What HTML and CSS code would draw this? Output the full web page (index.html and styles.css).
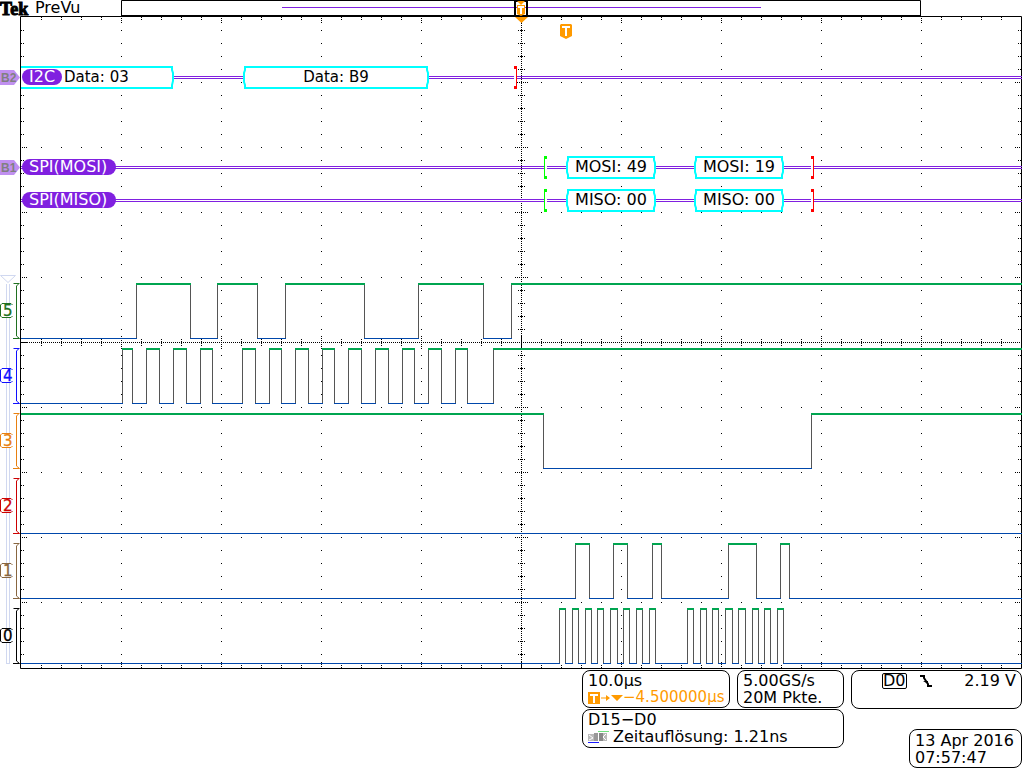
FILE: index.html
```html
<!DOCTYPE html>
<html lang="de">
<head>
<meta charset="utf-8">
<title>Tek PreVu</title>
<link rel="stylesheet" href="styles.css">
</head>
<body>
<main class="scope">
  <svg class="screen" viewBox="0 0 1024 670" role="img" aria-label="Oszilloskop">
    <text class="brand" x="0" y="15">Tek</text>
    <text class="label" x="35" y="13">PreVu</text>

    <g class="record">
      <path class="ink" d="M121.5 15V.5H920.5V15"/>
      <path class="ink thick" d="M121 16H921"/>
      <path class="bus" d="M282 7.5H761"/>
      <rect class="window" x="515" y="1" width="12" height="15"/>
    </g>

    <g id="ranges"></g>

    <path class="ink" d="M20.5 668.5V16.5H1021.5V668.5Z"/>
    <g class="grid" id="grid"></g>

    <g id="traces"></g>

    <g class="buses">
      <path class="bus" d="M21 76.5H1022M21 78.5H1022M21 166.5H1022M21 168.5H1022M21 199.5H1022M21 201.5H1022"/>
      <path class="packet" d="M21 67H172V70L173 73V81L172 85V88H21"/>
      <g id="packets"></g>
      <g id="marks"></g>
      <rect class="pill" x="22" y="69" width="40" height="16" rx="8"/>
      <rect class="pill" x="22" y="159" width="94" height="16" rx="8"/>
      <rect class="pill" x="22" y="192" width="94" height="16" rx="8"/>
      <text class="label light" x="29" y="82">I2C</text>
      <text class="label data" x="64" y="82">Data: 03</text>
      <text class="label light" x="29" y="172">SPI(MOSI)</text>
      <text class="label light" x="29" y="205">SPI(MISO)</text>
    </g>

    <g class="busTags">
      <path class="tag" d="M0 70H14L20 77.500L14 85H0Z"/>
      <path class="tag" d="M0 160H14L20 167.500L14 175H0Z"/>
      <text class="tagText" x="1" y="82">B2</text>
      <text class="tagText" x="1" y="172">B1</text>
    </g>

    <g class="triggers">
      <path class="orange" d="M515 17H528L521.500 23ZM517 1H525L521 5ZM517 5H525V14L521 16L517 14Z"/>
      <path class="cut" d="M518 7H524M521 7V14"/>
      <path class="orange" d="M561 24H571L572 25V36L566 39L560 36V25Z"/>
      <path class="cut" d="M562 27H570M566 27V36"/>
    </g>
  </svg>

  <footer class="readouts">
    <section class="stack">
      <div class="row">
        <div class="box timebase">
          <div>10.0µs</div>
          <div class="delay">
            <svg class="delayIcon" viewBox="0 0 35 14" aria-hidden="true">
              <path class="orange" d="M0 1H12V13H0ZM18 4L22 7L18 10ZM23 4H35L29 10Z"/>
              <path class="cut" d="M2 4H10M6 4V12"/>
              <path class="arrow" d="M13 7H20"/>
            </svg><span>−4.500000µs</span>
          </div>
        </div>
        <div class="box rate">
          <div>5.00GS/s</div>
          <div>20M Pkte.</div>
        </div>
      </div>
      <div class="box digital">
        <div>D15−D0</div>
        <div class="resolution">
          <svg class="logic" viewBox="0 0 21 12" aria-hidden="true">
            <path fill="#bbb" d="M0 3H6V10H0Z"/><path fill="#999" d="M6 2H10V10H6Z"/><path fill="#888" d="M11 2H15V10H11Z"/><path fill="#bbb" d="M15 2H19V10H15Z"/>
            <path stroke="#fff" fill="none" d="M1 4L5 7L1 9M18 3L15 6L18 9"/><path stroke="#1a1aff" d="M0 11.500H11"/><path stroke="#70e080" d="M10 .500H21"/>
          </svg>
          <span>Zeitauflösung: 1.21ns</span>
        </div>
      </div>
    </section>
    <section class="side">
      <div class="box trigger">
        <span class="source">D0</span>
        <svg class="slope" viewBox="0 0 12 12" aria-label="fallende Flanke"><path class="step" d="M0 1H4V3L8 9V11H12"/><path d="M3 6H8V9Z"/></svg>
        <span class="level">2.19 V</span>
      </div>
      <div class="box clock">
        <div>13 Apr 2016</div>
        <div>07:57:47</div>
      </div>
    </section>
  </footer>
</main>
<script src="script.js"></script>
</body>
</html>
```
FILE: styles.css
```css
* { box-sizing: border-box; }

body {
  margin: 0;
  background: #fff;
  color: #000;
  font: 16px/17px "DejaVu Sans", sans-serif;
}

.scope { display: flex; flex-direction: column; }
.screen { display: block; width: 100%; height: auto; }

.label { font-size: 16px; }
.data { font-size: 15px; }
.light { fill: #fff; }
.brand { font: bold 18px "Liberation Serif", serif; stroke: #000; stroke-width: 1; }
.middle { text-anchor: middle; }

.ink { fill: none; stroke: #000; }
.thick { stroke-width: 2; }
.window { fill: none; stroke: #000; stroke-width: 2; }
.bus { fill: none; stroke: #8020e0; }
.packet { fill: #fff; stroke: #00ffff; stroke-width: 2; }
.pill { fill: #8020e0; }
.tag { fill: #c090f0; }
.tagText { fill: #808080; font: bold 12px "Liberation Sans", sans-serif; }

.grid path { fill: none; stroke: #000; }
.major { stroke-dasharray: 1 12; }
.minor { stroke-dasharray: 1 19; }
.fine { stroke-dasharray: 1 1; }

.high { fill: none; stroke: #00a550; stroke-width: 2; }
.low { fill: none; stroke: #0047ab; }
.edge { fill: none; stroke: #555; }

.gap { fill: #fff; }
.start { fill: #00ff00; }
.stop { fill: #ff0000; }
.rail { fill: none; stroke: #d0d8f0; }
.range { fill: none; }
.channel { font-size: 15px; }

.orange { fill: #ff9a00; }
.cut { fill: none; stroke: #fff; stroke-width: 2; }
.arrow { fill: none; stroke: #ff9a00; }

.readouts {
  display: flex;
  justify-content: space-between;
  gap: 7px;
  padding: 0 2px 2px 582px;
}
.stack { display: flex; flex-direction: column; gap: 1px; width: 262px; flex: none; }
.row { display: flex; gap: 7px; }
.box {
  border: 1px solid #000;
  border-radius: 8px;
  padding: 1px 5px;
  white-space: nowrap;
}
.timebase { width: 148px; height: 38px; }
.rate { flex: 1; }
.delay { display: flex; align-items: center; color: #ff9a00; font-size: 15px; }
.delayIcon { width: 35px; height: 14px; flex: none; }
.digital { height: 39px; }
.resolution { display: flex; align-items: center; gap: 4px; }
.logic { width: 21px; height: 12px; }
.side { display: flex; flex-direction: column; align-items: flex-end; gap: 20px; flex: 1; }
.trigger { display: flex; align-items: flex-start; width: 100%; height: 39px; padding: 2px 5px 0 30px; }
.source { border: 1px solid #000; border-radius: 2px; line-height: 14px; }
.slope { width: 12px; height: 12px; margin: 2px 0 0 13px; }
.step { fill: none; stroke: #000; stroke-width: 2; }
.level { margin-left: auto; line-height: 16px; }
.clock { width: 113px; padding-top: 2px; }
```
FILE: script.js
```js
const NS = "http://www.w3.org/2000/svg";

function add(parent, name, attrs, text) {
  const node = document.createElementNS(NS, name);
  for (const key in attrs) node.setAttribute(key, attrs[key]);
  if (text) node.textContent = text;
  document.getElementById(parent).appendChild(node);
}

// Graticule: ten divisions by ten, five subdivisions each.
let columns = "", rows = "", fine = "M521.5 17V668M21 342.5H1021";
for (let x = 121; x < 1000; x += 100) {
  columns += `M${x + 0.5} 30V660`;
  fine += `M${x + 0.5} 18V23M${x + 0.5} 336V349M${x + 0.5} 662V667`;
}
for (let y = 82; y < 660; y += 65) {
  rows += `M41 ${y + 0.5}H1020`;
  fine += `M22 ${y + 0.5}H27M1015 ${y + 0.5}H1020M515 ${y + 0.5}H528`;
}
let solid = "";
for (let x = 41; x < 1020; x += 20) {
  if (x % 100 === 21) continue;
  fine += `M${x + 0.5} 17V20M${x + 0.5} 665V668`;
  solid += `M${x + 0.5} 339V340M${x + 0.5} 341V344M${x + 0.5} 345V346`;
}
for (let y = 30; y < 660; y += 13) {
  if (y % 65 === 17) continue;
  fine += `M21 ${y + 0.5}H24M1018 ${y + 0.5}H1021`;
  solid += `M518 ${y + 0.5}H519M520 ${y + 0.5}H523M524 ${y + 0.5}H525`;
}
add("grid", "path", { class: "major", d: columns });
add("grid", "path", { class: "minor", d: rows });
add("grid", "path", { class: "fine", d: fine });
add("grid", "path", { d: solid });

// Digital channels: top of the trace, starting level, x of each transition.
const channels = [
  { id: 5, color: "#207020", top: 284, level: 0, edges: [136, 190, 217, 257, 285, 364, 418, 483, 511] },
  { id: 4, color: "#1010ff", top: 349, level: 0, edges: [122, 132, 146, 159, 173, 186, 200, 212, 242, 255, 269, 281, 295, 308, 322, 334, 348, 361, 375, 388, 402, 414, 428, 441, 455, 467, 493] },
  { id: 3, color: "#e88010", top: 414, level: 1, edges: [543, 811] },
  { id: 2, color: "#cc0000", top: 479, level: 0, edges: [] },
  { id: 1, color: "#886640", top: 544, level: 0, edges: [575, 589, 613, 627, 652, 661, 728, 756, 780, 789] },
  { id: 0, color: "#000000", top: 609, level: 0, edges: [559, 565, 572, 578, 585, 591, 597, 603, 610, 617, 623, 629, 636, 642, 649, 655, 687, 693, 700, 706, 712, 718, 725, 732, 738, 745, 752, 758, 764, 770, 777, 783] }
];

add("ranges", "path", { class: "rail", d: "M.5 275.5H15.5L8 282.5ZM6.5 284V663M9.5 284V663M6 663.5H10" });

for (const { id, color, top, level, edges } of channels) {
  let from = 21, state = level, high = "", low = "", edge = "";
  for (const x of [...edges, 1021]) {
    if (state) high += `M${from} ${top}H${x + 1}`;
    else low += `M${from} ${top + 54.5}H${x + 1}`;
    if (x < 1021) edge += `M${x + 0.5} ${top + 1}V${top + 54}`;
    from = x;
    state = 1 - state;
  }
  add("traces", "path", { class: "low", d: low });
  add("traces", "path", { class: "edge", d: edge });
  add("traces", "path", { class: "high", d: high });
  add("ranges", "path", { class: "range", stroke: color, d: `M19.5 ${top - 0.5}H13.5M18.5 ${top}L16.5 ${top + 2}V${top + 52}L19.5 ${top + 54.5}H13` });
  add("ranges", "path", { stroke: color, fill: "#fff", d: `M12.5 ${top + 21}L11 ${top + 19.5}H2L.5 ${top + 21}V${top + 32}L2 ${top + 33.5}H11L12.5 ${top + 32}` });
  add("ranges", "text", { class: "channel", fill: color, stroke: color, "stroke-width": 0.3, x: 3, y: top + 32 }, String(id));
}

// Decoded bus packets.
const packets = [
  [244, 428, 67, "Data: B9", "data"],
  [567, 655, 157, "MOSI: 49", ""], [695, 783, 157, "MOSI: 19", ""],
  [567, 655, 190, "MISO: 00", ""], [695, 783, 190, "MISO: 00", ""]
];
for (const [l, r, y, text, kind] of packets) {
  add("packets", "path", { class: "packet", d: `M${l + 1} ${y}H${r - 1}V${y + 3}L${r} ${y + 6}V${y + 15}L${r - 1} ${y + 18}V${y + 21}H${l + 1}V${y + 18}L${l} ${y + 15}V${y + 6}L${l + 1} ${y + 3}Z` });
  add("packets", "text", { class: "label middle " + kind, x: (l + r) / 2, y: y + 15 }, text);
}

// Start and stop brackets.
for (const [x, y, kind] of [[514, 66, "stop"], [544, 156, "start"], [544, 189, "start"], [811, 156, "stop"], [811, 189, "stop"]]) {
  const bar = kind === "stop" ? x + 2 : x;
  add("marks", "rect", { class: "gap", x, y, width: 3, height: 23 });
  add("marks", "path", { class: kind, d: `M${x} ${y}h3v3h-3zM${x} ${y + 20}h3v3h-3zM${bar} ${y}h1v23h-1z` });
}
```
